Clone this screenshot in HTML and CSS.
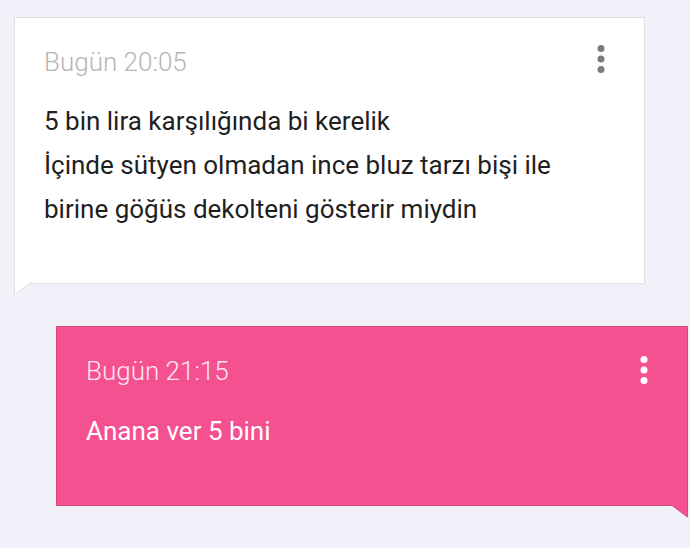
FILE: index.html
```html
<!DOCTYPE html>
<html lang="tr">
<head>
  <meta charset="UTF-8" />
  <title>Mesajlar</title>
  <meta name="viewport" content="width=device-width, initial-scale=1.0" />
  <link rel="stylesheet" href="styles.css">
</head>
<body>
  <div class="thread">
    <div class="bubble incoming">
      <div class="bubble-header">
        <span class="time">Bugün 20:05</span>
        <svg class="more" width="8" height="30" viewBox="0 0 8 30"><circle cx="4" cy="4.5" r="3.5"/><circle cx="4" cy="15" r="3.5"/><circle cx="4" cy="25.5" r="3.5"/></svg>
      </div>
      <div class="bubble-text">5 bin lira karşılığında bi kerelik<br>İçinde sütyen olmadan ince bluz tarzı bişi ile<br>birine göğüs dekolteni gösterir miydin</div>
      <svg class="tail" width="18" height="14" viewBox="0 0 18 14"><path d="M0.5 0 L0.5 13 L17 0" fill="#fff" stroke="#e0e0e6"/></svg>
    </div>

    <div class="bubble outgoing">
      <div class="bubble-header">
        <span class="time">Bugün 21:15</span>
        <svg class="more" width="8" height="30" viewBox="0 0 8 30"><circle cx="4" cy="4.5" r="3.5"/><circle cx="4" cy="15" r="3.5"/><circle cx="4" cy="25.5" r="3.5"/></svg>
      </div>
      <div class="bubble-text">Anana ver 5 bini</div>
      <svg class="tail" width="19" height="14" viewBox="0 0 19 14"><path d="M1 0 L18.5 13 L18.5 0" fill="#f55190" stroke="#d64a80"/></svg>
    </div>
  </div>
</body>
</html>
```

FILE: styles.css
```css
:root {
  --bg: #f1f1f9;
  --pink: #f55190;
  --pink-dark: #d64a80;
  --line: #e0e0e6;
}

body {
  margin: 0;
  background: var(--bg);
  font-family: Roboto, "Noto Sans", sans-serif;
}

.thread {
  display: flex;
  flex-direction: column;
  padding: 17px 0 42px;
  gap: 42px;
}

.bubble {
  position: relative;
  box-sizing: border-box;
  padding: 28px 39px 52px 29px;
}

.incoming {
  margin-left: 14px;
  width: 631px;
  height: 267px;
  background: white;
  border: 1px solid var(--line);
}

.outgoing {
  margin-left: 56px;
  width: 632px;
  height: 180px;
  background: var(--pink);
  border: 1px solid var(--pink-dark);
  color: white;
}

.bubble-header {
  display: flex;
  justify-content: space-between;
  align-items: center;
  height: 32px;
}

.time {
  font-size: 26px;
  font-weight: 300;
  line-height: 32px;
  color: #b6b6b6;
}

.outgoing .time {
  color: #fde6ef;
}

.more {
  fill: #7b7b7b;
  margin-top: -6px;
}

.outgoing .more {
  fill: white;
  margin-top: -2px;
}

.bubble-text {
  margin-top: 21px;
  font-size: 26px;
  line-height: 44px;
  color: #1f1f1f;
}

.outgoing .bubble-text {
  margin-top: 22px;
  color: white;
}

/* tails */
.tail {
  position: absolute;
  top: 100%;
  margin-top: -1px;
}

.incoming .tail {
  left: -1px;
}

.outgoing .tail {
  right: -1px;
}
```
